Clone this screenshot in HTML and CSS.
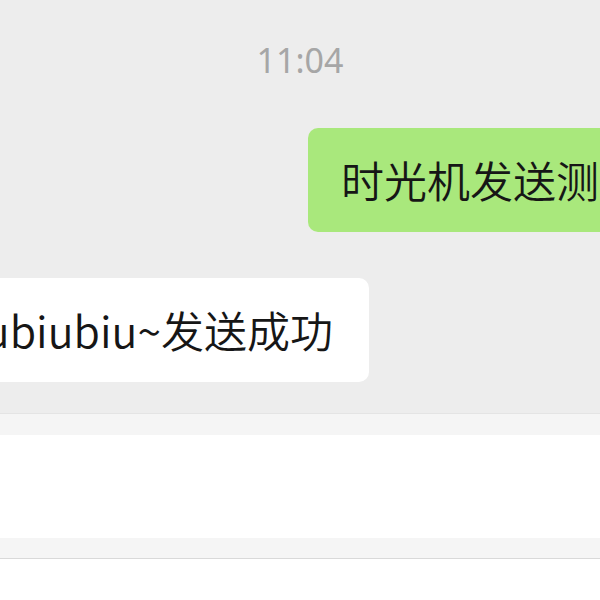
FILE: index.html
```html
<!DOCTYPE html>
<html lang="zh">
<head>
<meta charset="utf-8">
<link rel="stylesheet" href="styles.css">
</head>
<body>
<div class="chat">
  <div class="time">11:04</div>
  <div class="row row-right">
    <div class="bubble bubble-green">时光机发送测试</div>
  </div>
  <div class="row row-left">
    <div class="bubble bubble-white">biubiubiu~发送成功</div>
  </div>
</div>
<div class="composer">
  <div class="strip"></div>
  <div class="input"></div>
  <div class="strip strip-bottom"></div>
  <div class="below"></div>
</div>
</body>
</html>
```
FILE: styles.css
```css
html, body {
  margin: 0;
  padding: 0;
  width: 600px;
  height: 600px;
  overflow: hidden;
  background: #ffffff;
  font-family: "Noto Sans CJK SC", "Noto Sans", sans-serif;
}
.chat {
  background: #ededed;
  height: 413px;
  overflow: hidden;
}
.time {
  margin-top: 38px;
  height: 44px;
  line-height: 44px;
  text-align: center;
  color: #a6a6a6;
  font-family: "Noto Sans", "Noto Sans CJK SC", sans-serif;
  font-size: 34px;
}
.row {
  display: flex;
  white-space: nowrap;
}
.row-right {
  margin-top: 46px;
  padding-left: 308px;
}
.row-left {
  margin-top: 46px;
  width: 369px;
  justify-content: flex-end;
}
.bubble {
  flex: none;
  height: 104px;
  line-height: 102px;
  font-size: 43px;
  font-weight: 350;
  color: #161616;
  border-radius: 10px;
}
.bubble-green {
  background: #a9e87c;
  padding: 0 33px;
}
.bubble-white {
  background: #ffffff;
  padding: 0 36px;
}
.composer {
  border-top: 1px solid #e4e4e4;
}
.strip {
  height: 21px;
  background: #f5f5f5;
}
.input {
  height: 103px;
  background: #ffffff;
}
.strip-bottom {
  height: 20px;
  border-bottom: 1px solid #d9d9d9;
}
.below {
  height: 60px;
  background: #ffffff;
}
```
